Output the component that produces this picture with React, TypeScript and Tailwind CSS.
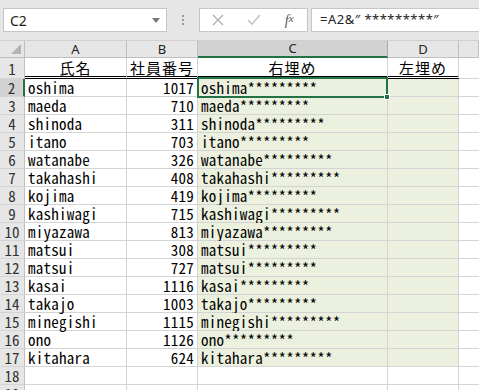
import clsx from "clsx";

const ROWS = [
  { name: "oshima", no: 1017 },
  { name: "maeda", no: 710 },
  { name: "shinoda", no: 311 },
  { name: "itano", no: 703 },
  { name: "watanabe", no: 326 },
  { name: "takahashi", no: 408 },
  { name: "kojima", no: 419 },
  { name: "kashiwagi", no: 715 },
  { name: "miyazawa", no: 813 },
  { name: "matsui", no: 308 },
  { name: "matsui", no: 727 },
  { name: "kasai", no: 1116 },
  { name: "takajo", no: 1003 },
  { name: "minegishi", no: 1115 },
  { name: "ono", no: 1126 },
  { name: "kitahara", no: 624 },
];

const GRID = "grid grid-cols-[25px_102px_71px_190px_71px_1fr]";
const CELL_FONT = "font-['Noto_Sans_Mono_CJK_JP','MS_Gothic','Liberation_Mono',monospace]";
const JP_FONT = "font-['Noto_Sans_CJK_JP',sans-serif]";

function RowHead({ n, active }: { n: number | string; active?: boolean }) {
  return (
    <div
      className={clsx(
        "flex items-center justify-center border-b border-[#d4d4d4] text-[15px] leading-none text-[#333] tracking-normal",
        CELL_FONT,
        active ? "bg-[#d2d2d2] border-r-2 border-r-[#217346]" : "bg-[#e6e6e6] border-r border-r-[#bfbfbf]"
      )}
    >
      {n}
    </div>
  );
}

export default function App() {
  return (
    <div className="w-[479px] h-[390px] overflow-hidden bg-white select-none">
      {/* formula bar */}
      <div className="h-[41px] bg-[#e6e6e6] flex items-start pt-[8px] pl-[3px] border-b border-[#d0d0d0]">
        <div className="w-[164px] h-[24px] bg-white border border-[#c6c6c6] flex items-center justify-between pl-[6px] pr-[6px]">
          <span className="font-['Noto_Sans',sans-serif] text-[14px] text-[#222]">C2</span>
          <svg width="8" height="5" viewBox="0 0 8 5">
            <path d="M0 0h8L4 5z" fill="#777" />
          </svg>
        </div>
        <div className="w-[32px] h-[24px] flex flex-col items-center justify-center gap-[2px]">
          <span className="w-[2px] h-[2px] bg-[#999]" />
          <span className="w-[2px] h-[2px] bg-[#999]" />
          <span className="w-[2px] h-[2px] bg-[#999]" />
        </div>
        <div className="w-[109px] h-[24px] bg-white border border-[#c6c6c6] flex items-center">
          <div className="w-[36px] flex justify-center">
            <svg width="12" height="12" viewBox="0 0 12 12">
              <path d="M1 1l10 10M11 1L1 11" stroke="#b0b0b0" strokeWidth="1.3" />
            </svg>
          </div>
          <div className="w-[36px] flex justify-center">
            <svg width="14" height="12" viewBox="0 0 14 12">
              <path d="M1 6l4 4L13 1" stroke="#c4c4c4" strokeWidth="1.6" fill="none" />
            </svg>
          </div>
          <div className="w-[36px] flex justify-center font-['Liberation_Serif',serif] italic text-[14px] text-[#555]">
            f<span className="text-[11px]">x</span>
          </div>
        </div>
        <div className="ml-[3px] flex-1 h-[24px] bg-white border border-[#c6c6c6] border-r-0 flex items-center pl-[8px]">
          <span className="font-['Noto_Sans',sans-serif] text-[13px] text-[#222] tracking-[0.5px]">=A2&amp;″ *********″</span>
        </div>
      </div>

      {/* column headers */}
      <div className={clsx(GRID, "h-[17px] bg-[#e6e6e6]")}>
        <div className="border-r border-b border-[#bfbfbf] flex items-end justify-end pr-[3px] pb-[3px]">
          <svg width="10" height="10" viewBox="0 0 10 10">
            <path d="M10 0V10H0z" fill="#b4b4b4" />
          </svg>
        </div>
        {["A", "B", "C", "D", ""].map((c) => (
          <div
            key={c || "E"}
            className={clsx(
              "flex items-center justify-center border-r font-['Noto_Sans',sans-serif] text-[13px] text-[#222] leading-none",
              c === "C"
                ? "bg-[#d2d2d2] border-r-[#ababab] border-b-2 border-b-[#217346]"
                : "border-r-[#bfbfbf] border-b border-b-[#bfbfbf]"
            )}
          >
            {c}
          </div>
        ))}
      </div>

      {/* row 1 */}
      <div className={clsx(GRID, "h-[21px] overflow-hidden")}>
        <RowHead n={1} />
        {["氏名", "社員番号", "右埋め", "左埋め"].map((t) => (
          <div
            key={t}
            className={clsx(
              "flex items-center justify-center overflow-hidden whitespace-nowrap border-r border-r-[#d4d4d4] border-b-[3px] border-double border-b-black text-[15px] tracking-[1px] text-black leading-none pt-[1px]",
              JP_FONT
            )}
          >
            {t}
          </div>
        ))}
        <div className="border-b border-[#d4d4d4]" />
      </div>

      {/* data rows */}
      {ROWS.map((r, i) => (
        <div key={i} className={clsx(GRID, "h-[18px] text-[15px] leading-none text-black tracking-[0.25px]", CELL_FONT)}>
          <RowHead n={i + 2} active={i === 0} />
          <div className="flex items-center pl-[3px] border-r border-b border-[#d4d4d4]">{r.name}</div>
          <div className="flex items-center justify-end pr-[3px] border-r border-b border-[#d4d4d4]">{r.no}</div>
          <div className="relative flex items-center pl-[3px] bg-[#ebf1de] border-r border-b border-[#d4d4d4]">
            {r.name}*********
            {i === 0 && (
              <div className="absolute -top-[2px] -left-[1px] -right-[1px] -bottom-[2px] border-2 border-[#217346] z-10">
                <div className="absolute -right-[4px] -bottom-[4px] w-[6px] h-[6px] bg-[#217346] border border-white" />
              </div>
            )}
          </div>
          <div className="bg-[#ebf1de] border-r border-b border-[#d4d4d4]" />
          <div className="border-b border-[#d4d4d4]" />
        </div>
      ))}

      {/* empty rows */}
      {[18, 19].map((n) => (
        <div key={n} className={clsx(GRID, "h-[18px]")}>
          <RowHead n={n} />
          <div className="border-r border-b border-[#d4d4d4]" />
          <div className="border-r border-b border-[#d4d4d4]" />
          <div className="border-r border-b border-[#d4d4d4]" />
          <div className="border-r border-b border-[#d4d4d4]" />
          <div className="border-b border-[#d4d4d4]" />
        </div>
      ))}
    </div>
  );
}
